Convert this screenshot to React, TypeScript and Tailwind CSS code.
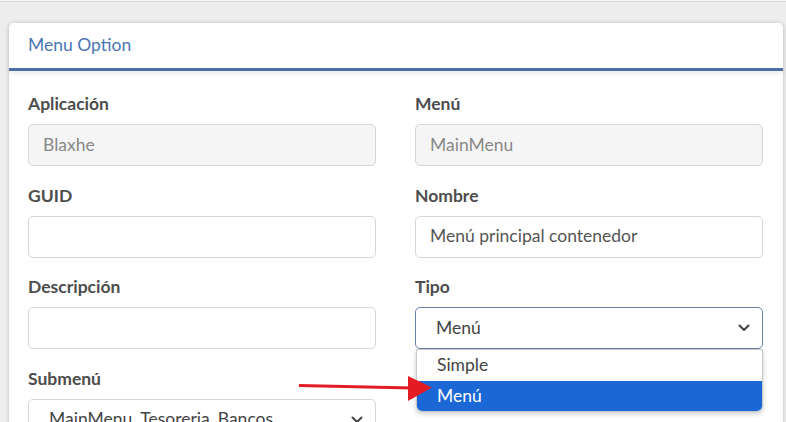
import React from "react";

const font = { fontFamily: "Lato, 'Noto Sans', sans-serif" };

function Label({ children }: { children: React.ReactNode }) {
  return <div className="h-6 leading-6 text-[17.5px] font-bold text-[#4d4d4d] mb-[8px]">{children}</div>;
}

function Chevron() {
  return (
    <svg width="12" height="8" viewBox="0 0 12 8" className="absolute right-[12px] top-1/2 -translate-y-1/2">
      <path d="M1.5 1.5 L6 6 L10.5 1.5" fill="none" stroke="#444" strokeWidth="2" strokeLinecap="round" strokeLinejoin="round" />
    </svg>
  );
}

export default function App() {
  return (
    <div className="w-[786px] h-[422px] overflow-hidden bg-[#ededed] relative" style={font}>
      <div className="h-[2px] bg-[#f4f4f4] border-b border-[#dadada]" />
      <div className="mt-[21px] ml-[9px] w-[774px] bg-white rounded-t-[5px] shadow-[0_0_4px_rgba(0,0,0,0.18)] h-[420px]">
        <div className="h-[48px] flex items-center pl-[19px] border-b-[3px] border-[#4a6ea5] shadow-[0_3px_5px_rgba(0,0,0,0.08)]">
          <span className="text-[17.5px] text-[#4a76b3] font-normal">Menu Option</span>
        </div>
        <div className="pt-[21px] pl-[19px] pr-[20px] grid grid-cols-[348px_348px] gap-x-[39px] gap-y-[17.5px]">
          <div>
            <Label>Aplicación</Label>
            <div className="h-[42px] rounded-[5px] border border-[#d6d6d6] bg-[#f5f5f5] flex items-center px-[14px] text-[17.5px] text-[#888]">Blaxhe</div>
          </div>
          <div>
            <Label>Menú</Label>
            <div className="h-[42px] rounded-[5px] border border-[#d6d6d6] bg-[#f5f5f5] flex items-center px-[14px] text-[17.5px] text-[#888]">MainMenu</div>
          </div>
          <div>
            <Label>GUID</Label>
            <div className="h-[42px] rounded-[5px] border border-[#d6d6d6] bg-white" />
          </div>
          <div>
            <Label>Nombre</Label>
            <div className="h-[42px] rounded-[5px] border border-[#d6d6d6] bg-white flex items-center px-[14px] text-[17.5px] text-[#555]">Menú principal contenedor</div>
          </div>
          <div>
            <Label>Descripción</Label>
            <div className="h-[42px] rounded-[5px] border border-[#d6d6d6] bg-white" />
          </div>
          <div className="relative">
            <Label>Tipo</Label>
            <div className="relative h-[42px] rounded-[5px] border border-[#6584ad] bg-white flex items-center pl-[20px] text-[17.5px] text-[#444]">
              Menú
              <Chevron />
            </div>
            <div className="absolute left-[1px] right-0 top-[74px] h-[63px] bg-white rounded-b-[6px] border border-[#c8c8c8] shadow-[0_2px_5px_rgba(0,0,0,0.2)] overflow-hidden text-[17.5px]">
              <div className="h-[31px] flex items-center pl-[20px] text-[#444]">Simple</div>
              <div className="h-[30px] flex items-center pl-[20px] bg-[#1a67d5] text-white">Menú</div>
            </div>
          </div>
          <div>
            <Label>Submenú</Label>
            <div className="relative h-[42px] rounded-[5px] border border-[#d6d6d6] bg-white flex items-center pl-[20px] text-[17.5px] text-[#444]">
              MainMenu_Tesoreria_Bancos
              <Chevron />
            </div>
          </div>
        </div>
      </div>
      <svg className="absolute left-0 top-0 pointer-events-none" width="786" height="422">
        <line x1="299" y1="385.5" x2="412" y2="388" stroke="#e31b23" strokeWidth="3" />
        <polygon points="408,376 432,387.5 408,401" fill="#e31b23" />
      </svg>
    </div>
  );
}
